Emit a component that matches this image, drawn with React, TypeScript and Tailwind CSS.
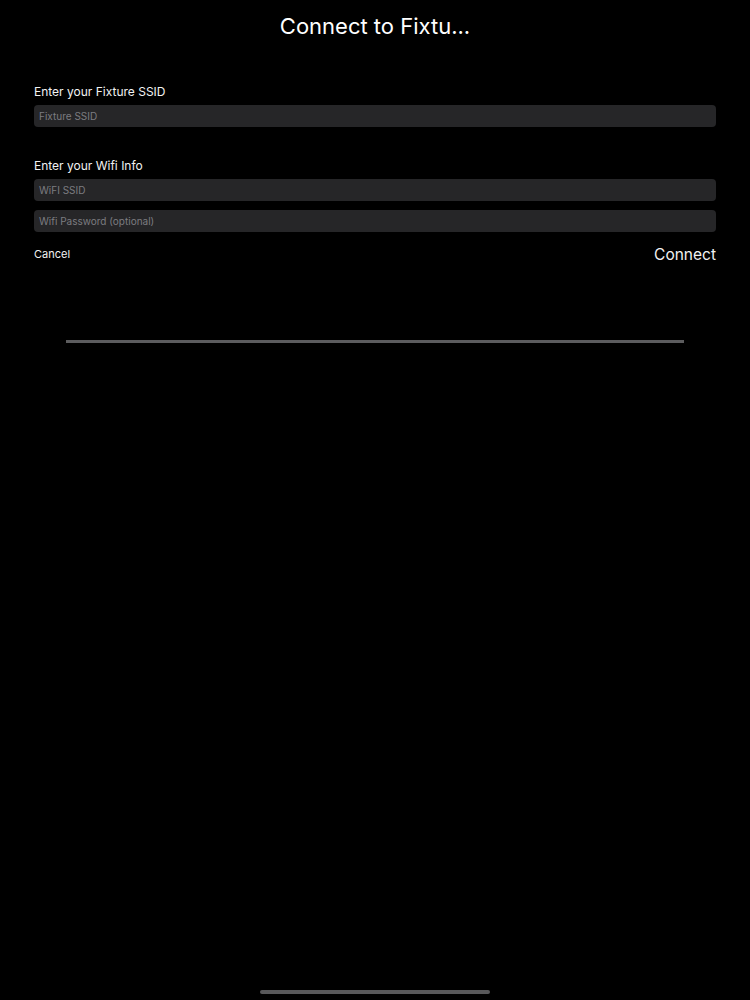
export default function App() {
  return (
    <div
      className="w-[750px] h-[1000px] bg-[#000000] text-white flex flex-col"
      style={{ fontFamily: "Inter, 'Liberation Sans', sans-serif" }}
    >
      <div className="h-[52px] flex items-center justify-center">
        <h1 className="text-[22px] leading-none">Connect to Fixtu...</h1>
      </div>

      <div className="px-[34px] pt-[32px]">
        <p className="text-[12px] leading-[15px] text-[#f2f2f2]">Enter your Fixture SSID</p>
        <div className="mt-[6px] h-[22px] rounded-[4px] bg-[#262628] flex items-center px-[5px]">
          <span className="text-[10px] text-[#7c7c80]">Fixture SSID</span>
        </div>

        <p className="mt-[31px] text-[12px] leading-[15px] text-[#f2f2f2]">Enter your Wifi Info</p>
        <div className="mt-[6px] h-[22px] rounded-[4px] bg-[#262628] flex items-center px-[5px]">
          <span className="text-[10px] text-[#7c7c80]">WiFI SSID</span>
        </div>
        <div className="mt-[9px] h-[22px] rounded-[4px] bg-[#262628] flex items-center px-[5px]">
          <span className="text-[10px] text-[#7c7c80]">Wifi Password (optional)</span>
        </div>

        <div className="mt-[11px] flex items-center justify-between">
          <button type="button" className="text-[11px] text-[#f2f2f2]">Cancel</button>
          <button type="button" className="text-[15.5px] text-[#f2f2f2]">Connect</button>
        </div>
      </div>

      <div className="px-[66px] mt-[74px]">
        <div className="h-[3px] bg-[#5c5c5e]" />
      </div>

      <div className="flex-1" />
      <div className="flex justify-center pb-[6px]">
        <div className="w-[230px] h-[4px] rounded-full bg-[#58585a]" />
      </div>
    </div>
  );
}
